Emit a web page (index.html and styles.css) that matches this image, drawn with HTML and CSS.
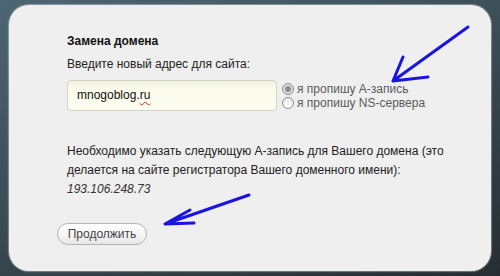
FILE: index.html
```html
<!DOCTYPE html>
<html lang="ru">
<head>
    <meta charset="UTF-8">
    <title>Замена домена</title>
    <link rel="stylesheet" href="styles.css">
</head>
<body>
    <div class="panel">
        <div class="title">Замена домена</div>
        <div class="label">Введите новый адрес для сайта:</div>

        <div class="domain-row">
            <div class="domain-input">mnogoblog.<span class="typo">ru</span></div>
            <div class="options">
                <div class="option">
                    <span class="radio checked"></span>
                    я пропишу А-запись
                </div>
                <div class="option">
                    <span class="radio"></span>
                    я пропишу NS-сервера
                </div>
            </div>
        </div>

        <p class="info">
            Необходимо указать следующую А-запись для Вашего домена (это<br>
            делается на сайте регистратора Вашего доменного имени):<br>
            <i>193.106.248.73</i>
        </p>

        <button class="next">Продолжить</button>
    </div>

    <!-- hand drawn arrows over the screenshot -->
    <svg class="arrows" width="500" height="276" viewBox="0 0 500 276">
        <g fill="none" stroke="#1a14e0" stroke-width="3" stroke-linecap="round" stroke-linejoin="round">
            <path d="M468 27 L393 81 M403 57 L393 81 L428 77"/>
            <path d="M249 195 L165 224 M190 210 L165 224 L194 223"/>
        </g>
    </svg>
</body>
</html>
```

FILE: styles.css
```css
body {
    margin: 0;
    width: 500px;
    height: 276px;
    overflow: hidden;
    background: linear-gradient(160deg, #4d6673 0%, #3c4d56 45%, #272e32 100%);
    font-family: "Liberation Sans", Arial, sans-serif;
    font-size: 12px;
    color: #222;
    position: relative;
}

.panel {
    box-sizing: border-box;
    margin: 5px 9px;
    height: 266px;
    background-color: #efefef;
    border-radius: 20px;
    padding: 28px 0 0 58px;
    box-shadow: 0 0 1px 1px rgba(255, 255, 255, 0.35);
}

.title {
    font-weight: bold;
    line-height: 16px;
    color: #111;
}

.label {
    margin-top: 7px;
    line-height: 16px;
    color: #222;
}

.domain-row {
    display: flex;
    align-items: center;
    margin-top: 8px;
}

.domain-input {
    box-sizing: border-box;
    width: 210px;
    height: 31px;
    padding: 0 9px;
    line-height: 29px;
    background: linear-gradient(to bottom, #f1f1e0 0%, #fbfbec 25%, #fdfdf0 100%);
    border: 1px solid #d3d3c6;
    border-radius: 4px;
    color: #111;
}

.typo {
    text-decoration: underline wavy #e02020;
    text-decoration-thickness: 1px;
    text-underline-offset: 2px;
}

.options {
    margin-left: 5px;
    color: #5a5a5a;
}

.option {
    display: flex;
    align-items: center;
    gap: 3px;
    line-height: 14px;
    height: 14px;
}

.radio {
    box-sizing: border-box;
    width: 12px;
    height: 12px;
    border: 1px solid #8c8c8c;
    border-radius: 50%;
    background: linear-gradient(to bottom, #e8e8e8, #ffffff);
    position: relative;
}

.radio.checked {
    background: #dcdcdc;
}

.radio.checked::after {
    content: "";
    position: absolute;
    left: 2px;
    top: 2px;
    width: 6px;
    height: 6px;
    border-radius: 50%;
    background: #8e8e8e;
}

.info {
    margin: 31px 0 0 0;
    line-height: 19px;
    color: #222;
}

.info i {
    color: #333;
}

.next {
    display: block;
    margin: 24px 0 0 -10px;
    width: 90px;
    height: 22px;
    padding: 0;
    font-family: "Liberation Sans", Arial, sans-serif;
    font-size: 12px;
    color: #444;
    background: linear-gradient(to bottom, #ffffff 0%, #f4f4f4 60%, #e6e6e6 100%);
    border: 1px solid #b4b4b4;
    border-radius: 11px;
}

.arrows {
    position: absolute;
    left: 0;
    top: 0;
    pointer-events: none;
}
```
